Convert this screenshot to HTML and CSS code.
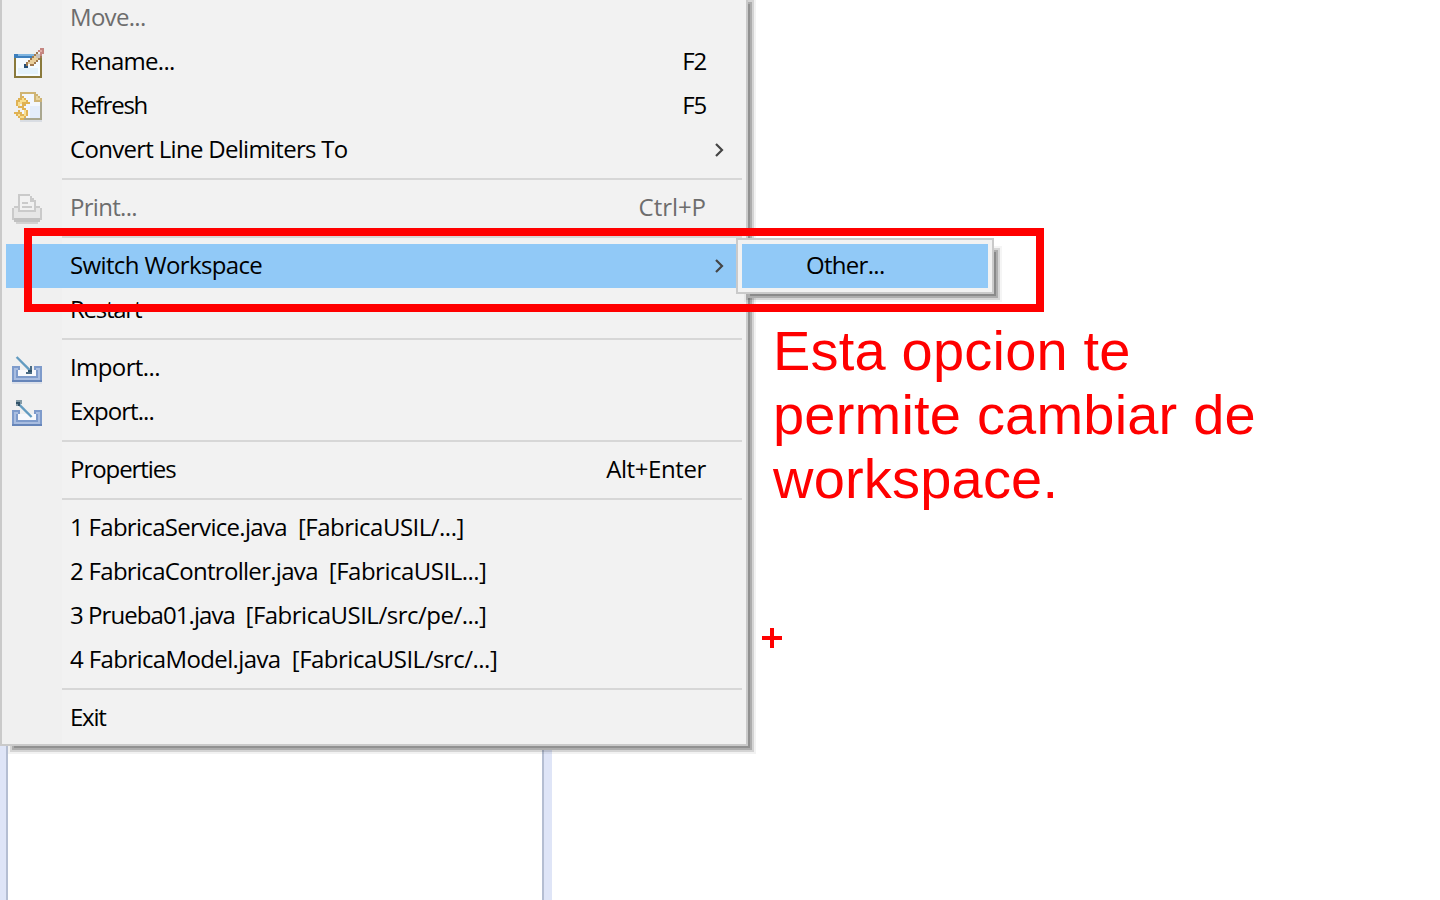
FILE: index.html
```
<!DOCTYPE html>
<html lang="es">
<head>
<meta charset="utf-8">
<title>Switch Workspace</title>
<link rel="stylesheet" href="styles.css">
</head>
<body>
<div class="screen">
  <div class="panel"></div>

  <div class="menu">
    <div class="item off"><span class="ico"></span><span class="label">Move...</span></div>
    <div class="item"><span class="ico"><svg class="i-rename" width="30" height="30" viewBox="0 0 15 15"><path fill="#f5fbff" d="M1 5h12v9H1z"/><path fill="#e4f2fb" d="M2 10h10v3H2z"/><path fill="#7fb4df" d="M0 3h11v1H0z"/><path fill="#3d7fbd" d="M0 3h2v1H0zM0 4h9v1H0z"/><path fill="#8a7a3c" d="M0 5h1v10H0zM13 5h1v10H13zM0 14h14v1H0z"/><path fill="#a07a50" d="M6 7h1v2H6zM7 6h1v1H7zM8 5h1v1H8zM9 4h1v1H9zM10 3h1v1h-1zM11 2h1v1h-1zM8 8h2v1H8zM10 7h1v1h-1zM11 6h1v1h-1zM12 5h1v1h-1zM13 4h1v1h-1z"/><path fill="#e9cf9c" d="M7 7h3v1H7zM8 6h3v1H8zM9 5h3v1H9zM10 4h2v1h-2z"/><path fill="#c9c1bb" d="M11 3h2v2h-2z"/><path fill="#c58681" d="M12 1h1v1h-1zM13 0h2v3h-1v1h-1V2h-1V1h1z"/><path fill="#dfaba5" d="M13 1h1v1h-1z"/><path fill="#254f76" d="M5 8h1v2H5zM6 9h1v1H6z"/></svg></span><span class="label">Rename...</span><span class="key k-f">F2</span></div>
    <div class="item"><span class="ico"><svg class="i-refresh" width="28" height="30" viewBox="0 0 14 15"><path fill="#d9dde3" d="M3 14h11v1H3z"/><path fill="#f3f7fd" d="M4 1h7l2 3v9H4z"/><path fill="#e4edfa" d="M8 7h5v6H8z"/><path fill="#cfb474" d="M3 0h8v1H3zM3 1h1v2H3zM10 1h1v3h3v1h-4zM11 1h1v1h-1zM12 2h1v1h-1zM13 3h1v1h-1z"/><path fill="#ead59d" d="M11 2h1v2h-1zM12 3h1v1h-1z"/><path fill="#aaa78f" d="M13 5h1v9H5v-1h8z"/><path fill="#e0b253" d="M4 2h1v1h1v1h1v1h1v1H6v1H4V6H3v1h1v1H2V7H1V4h1V3h2zM4 7h1v1h1v1h1v3H6v1H5v1H3v-1H2v-1H1v-1H0v-1h2V9h1v1h1v1h1V9H4z"/><path fill="#f9df91" d="M4 3h1v1h1v1H4v1H3v1H2V5h1V4h1zM5 9h1v3H5v1H3v-1H2v-1h1v1h2z"/></svg></span><span class="label t3">Refresh</span><span class="key k-f">F5</span></div>
    <div class="item"><span class="ico"></span><span class="label">Convert Line Delimiters To</span><svg class="arrow" width="10" height="14" viewBox="0 0 10 14"><path d="M1 1l6 6-6 6"/></svg></div>
    <div class="sep"></div>
    <div class="item off"><span class="ico"><svg class="i-print" width="30" height="30" viewBox="0 0 15 15"><path fill="#f1f1f1" d="M3 1h8l1 2v7H3z"/><path fill="#e6e6e6" d="M1 7h13v5H1z"/><path fill="#f1f1f1" d="M4 5h7v3H4z"/><path fill="#cacaca" d="M3 0h6v1H3zM3 1h1v7H3zM9 1h1v1h1v1h1v5h-1V4H9zM1 6h2v1H1zM12 6h2v1h-2zM0 7h1v6H0zM14 7h1v6h-1zM5 4h3v1H5zM5 6h5v1H5zM3 8h9v1H3z"/><path fill="#c1c1c1" d="M1 12h13v1H1zM1 13h13v1H1z"/><path fill="#d2d2d2" d="M2 14h11v1H2z"/></svg></span><span class="label">Print...</span><span class="key k-ctrl">Ctrl+P</span></div>
    <div class="sep"></div>
    <div class="item on"><span class="ico"></span><span class="label t6">Switch Workspace</span><svg class="arrow" width="10" height="14" viewBox="0 0 10 14"><path d="M1 1l6 6-6 6"/></svg></div>
    <div class="item"><span class="ico"></span><span class="label t3">Restart</span></div>
    <div class="sep"></div>
    <div class="item"><span class="ico"><svg class="i-io" width="30" height="28" viewBox="0 0 15 14"><path fill="#dbe0ea" d="M0 13h15v1H0z"/><path fill="#7e9bcb" d="M0 5h4v2H3v3h9V7h-1V5h4v8H0z"/><path fill="#a9bde0" d="M1 6h2v1H2v4h11V7h-1V6h2v6H1z"/><path fill="#6685b9" d="M0 12h15v1H0z"/><path fill="#f8f9fc" d="M3 7h9v3H3z"/><path class="shaft" d="M2.3.5L9 7.2"/><path fill="#4a6b84" d="M9 5h1v4H7V8h1V7h1z"/><path fill="#315269" d="M8 7h2v1H8z"/></svg></span><span class="label t8">Import...</span></div>
    <div class="item"><span class="ico"><svg class="i-io" width="30" height="28" viewBox="0 0 15 14"><path fill="#7e9bcb" d="M0 5h4v2H3v3h9V7h-1V5h4v8H0z"/><path fill="#a9bde0" d="M1 6h2v1H2v4h11V7h-1V6h2v6H1z"/><path fill="#6685b9" d="M0 12h15v1H0z"/><path fill="#f8f9fc" d="M3 7h9v3H3z"/><path class="shaft" d="M3 1.7l6.8 6.8"/><path fill="#839aa6" d="M2 0h3v1H2zM4 1h1v1H4zM2 2h1v1H2z"/><path fill="#315269" d="M2 1h2v1H2zM3 2h1v1H3z"/></svg></span><span class="label t9">Export...</span></div>
    <div class="sep"></div>
    <div class="item"><span class="ico"></span><span class="label t10">Properties</span><span class="key k-alt">Alt+Enter</span></div>
    <div class="sep"></div>
    <div class="item"><span class="ico"></span><span class="label">1 FabricaService.java&nbsp; <span class="path">[FabricaUSIL/...]</span></span></div>
    <div class="item"><span class="ico"></span><span class="label">2 FabricaController.java&nbsp; <span class="path">[FabricaUSIL...]</span></span></div>
    <div class="item"><span class="ico"></span><span class="label"><span class="t13">3 Prueba01.java&nbsp; </span><span class="path">[FabricaUSIL/src/pe/...]</span></span></div>
    <div class="item"><span class="ico"></span><span class="label"><span class="t14">4 FabricaModel.java&nbsp; </span><span class="path">[FabricaUSIL/src/...]</span></span></div>
    <div class="sep"></div>
    <div class="item"><span class="ico"></span><span class="label t3">Exit</span></div>
  </div>

  <div class="submenu"><div class="subitem"><span class="label">Other...</span></div></div>
  <div class="frame"></div>
  <p class="note">Esta opcion te<br>permite cambiar de<br>workspace.</p>
  <svg class="cross" width="20" height="20" viewBox="0 0 20 20"><path fill="#f00" d="M8 0h4v8h8v4h-8v8H8v-8H0V8h8z"/></svg>
</div>
</body>
</html>
```

FILE: styles.css
```
body { margin: 0; background: #fff; }
.screen { position: relative; width: 1440px; height: 900px; overflow: hidden; background: #fff; font-family: "Open Sans", "Noto Sans", sans-serif; font-size: 24px; color: #000; }
.panel { box-sizing: border-box; width: 552px; height: 900px; border: solid #dfe5f7; border-width: 0 8px 0 6px; background: #fff; box-shadow: inset 2px 0 #b5bed2, inset -2px 0 #b5bed2; }
.menu { position: absolute; left: 0; top: -10px; box-sizing: border-box; width: 748px; height: 756px; padding: 4px; border: 2px solid #cacaca; background: linear-gradient(90deg, #f0f0f0 60px, #f2f2f2 60px); box-shadow: 8px 8px 0 -6px #919191, 8px 8px 0 -4px #adadad, 8px 8px 0 -2px rgba(0,0,0,.12), 8px 8px 0 0 rgba(0,0,0,.05); }
.item { display: flex; align-items: center; height: 44px; white-space: pre; }
.ico { flex: 0 0 64px; height: 44px; display: flex; align-items: flex-start; }
.ico svg { shape-rendering: crispEdges; }
.i-rename { margin: 8px 0 0 8px; }
.i-refresh { margin: 8px 0 0 8px; }
.i-print { margin: 8px 0 0 6px; }
.i-io { margin: 10px 0 0 6px; }
.ico svg .shaft { fill: none; stroke: #629bc0; stroke-width: 1.2; shape-rendering: auto; }
.label { flex: 1; height: 44px; letter-spacing: -0.7px; line-height: 42px; }
.key { height: 44px; margin-right: 36px; line-height: 42px; }
.k-f { letter-spacing: -1.2px; }
.k-ctrl { letter-spacing: -0.05px; }
.k-alt { letter-spacing: -0.4px; }
.t3 { letter-spacing: -1.25px; }
.t6 { letter-spacing: -0.63px; }
.t8 { letter-spacing: -0.6px; }
.t9 { letter-spacing: -0.95px; }
.t10 { letter-spacing: -1.05px; }
.t13 { letter-spacing: -0.93px; }
.t14 { letter-spacing: -0.62px; }
.path { letter-spacing: -0.5px; }
.arrow { margin-right: 17px; fill: none; stroke: #454545; stroke-width: 2.2; }
.off { color: #6d6d6d; }
.on { background: #91c9f7; }
.sep { height: 2px; margin: 6px 0 6px 56px; background: #d7d7d7; }
.submenu { position: absolute; left: 736px; top: 238px; box-sizing: border-box; width: 258px; height: 56px; padding: 4px; border: 2px solid #cacaca; background: #f2f2f2; box-shadow: 8px 8px 0 -6px #8a8a8a, 8px 8px 0 -4px #adadad, 8px 8px 0 -2px rgba(0,0,0,.12), 8px 8px 0 0 rgba(0,0,0,.04); }
.subitem { display: flex; height: 44px; padding-left: 64px; background: #91c9f7; }
.frame { position: absolute; left: 24px; top: 228px; box-sizing: border-box; width: 1020px; height: 84px; border: 8px solid #f00; }
.note { position: absolute; left: 773px; top: 319px; margin: 0; font: 56px/64px "Liberation Sans", Arial, sans-serif; letter-spacing: 0.2px; color: #f00; white-space: nowrap; }
.cross { position: absolute; left: 762px; top: 628px; }
```
